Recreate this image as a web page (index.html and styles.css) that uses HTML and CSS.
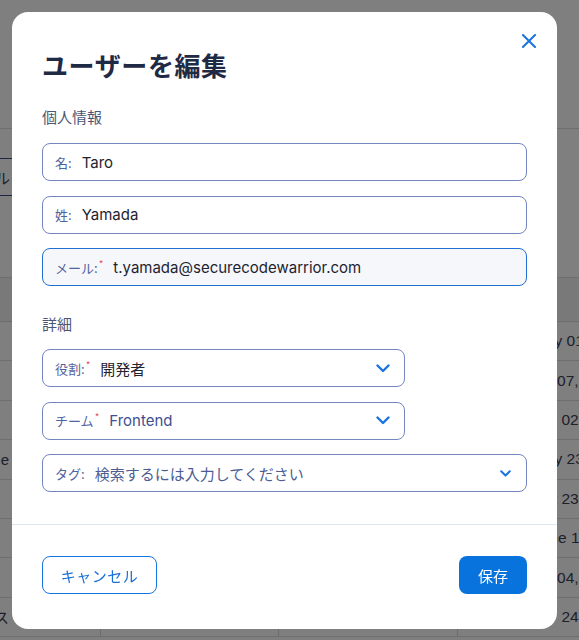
FILE: index.html
```html
<!DOCTYPE html>
<html lang="ja">
<head>
<meta charset="utf-8">
<title>ユーザーを編集</title>
<link rel="stylesheet" href="styles.css">
</head>
<body>
<div class="page">
  <div class="topbar"></div>
  <div class="toolbar"><button class="bg-btn">ファイル</button></div>
  <div class="table">
    <div class="row thead"><span></span><span></span><span></span><span></span></div>
    <div class="row"><span></span><span></span><span></span><span class="date">May 01, 2024</span></div>
    <div class="row"><span></span><span></span><span></span><span class="date">Jul 07, 2024</span></div>
    <div class="row"><span></span><span></span><span></span><span class="date">Oct 02, 2024</span></div>
    <div class="row"><span class="name">Frontende</span><span></span><span></span><span class="date">May 23, 2024</span></div>
    <div class="row"><span></span><span></span><span></span><span class="date">Oct 23, 2024</span></div>
    <div class="row"><span></span><span></span><span></span><span class="date">June 16, 2024</span></div>
    <div class="row"><span></span><span></span><span></span><span class="date">Jul 04, 2024</span></div>
    <div class="row"><span class="name">サービス</span><span></span><span></span><span class="date">Apr 24, 2024</span></div>
  </div>
</div>
<div class="backdrop"></div>
<div class="modal" role="dialog" aria-labelledby="modal-title">
  <button class="close" aria-label="閉じる">
    <svg width="14" height="14" viewBox="0 0 14 14"><path d="M1 1 L13 13 M13 1 L1 13" stroke="currentColor" stroke-width="2" stroke-linecap="square" fill="none"/></svg>
  </button>
  <div class="modal-body">
    <h1 class="title" id="modal-title">ユーザーを編集</h1>
    <h2 class="section-label">個人情報</h2>
    <div class="fields">
      <div class="field"><span class="field-label">名:</span><span class="field-value">Taro</span></div>
      <div class="field"><span class="field-label">姓:</span><span class="field-value">Yamada</span></div>
      <div class="field field-focus"><span class="field-label">メール:<sup class="req">*</sup></span><span class="field-value">t.yamada@securecodewarrior.com</span></div>
    </div>
    <h2 class="section-label section-gap">詳細</h2>
    <div class="fields">
      <div class="field select short"><span class="field-label">役割:<sup class="req">*</sup></span><span class="field-value">開発者</span>
        <svg class="chev" width="14" height="9" viewBox="0 0 14 9"><path d="M1.5 1.5 L7 7 L12.5 1.5" stroke="currentColor" stroke-width="2.4" fill="none" stroke-linecap="round" stroke-linejoin="round"/></svg></div>
      <div class="field select short"><span class="field-label">チーム<sup class="req">*</sup></span><span class="field-value blue">Frontend</span>
        <svg class="chev" width="14" height="9" viewBox="0 0 14 9"><path d="M1.5 1.5 L7 7 L12.5 1.5" stroke="currentColor" stroke-width="2.4" fill="none" stroke-linecap="round" stroke-linejoin="round"/></svg></div>
      <div class="field select"><span class="field-label">タグ:</span><span class="field-value placeholder">検索するには入力してください</span>
        <svg class="chev small" width="11" height="7" viewBox="0 0 11 7"><path d="M1.2 1.2 L5.5 5.5 L9.8 1.2" stroke="currentColor" stroke-width="2" fill="none" stroke-linecap="round" stroke-linejoin="round"/></svg></div>
    </div>
  </div>
  <div class="divider"></div>
  <div class="footer">
    <button class="btn btn-outline">キャンセル</button>
    <button class="btn btn-primary">保存</button>
  </div>
</div>
</body>
</html>
```
FILE: styles.css
```css
* { box-sizing: border-box; }
html, body { margin: 0; padding: 0; }
body {
  width: 579px;
  height: 640px;
  overflow: hidden;
  background: #ffffff;
  font-family: "Inter", "Noto Sans CJK JP", sans-serif;
}

/* background page */
.page { width: 579px; }
.topbar { height: 129px; border-bottom: 1px solid #dcdcdc; }
.toolbar { height: 149px; padding-top: 29px; border-bottom: 1px solid #dcdcdc; }
.bg-btn {
  display: block;
  margin-left: -130px;
  width: 142px;
  height: 38px;
  border: 1px solid #3a4a8c;
  border-left: 0;
  border-right: 0;
  background: #fff;
  color: #3c4257;
  font: 15px "Liberation Sans", "Noto Sans CJK JP", sans-serif;
  white-space: nowrap;
  text-align: right;
  padding: 0 2px 0 0;
}
.table { width: 579px; }
.row {
  display: grid;
  grid-template-columns: 101px 178px 179px 121px;
  height: 39.4px;
  border-bottom: 1px solid #dcdcdc;
  font: 15px "Liberation Sans", "Noto Sans CJK JP", sans-serif;
  color: #3c4257;
}
.row > span { border-right: 1px solid #dcdcdc; display: flex; align-items: center; overflow: hidden; white-space: nowrap; }
.row > span:last-child { border-right: 0; }
.thead { height: 44px; background: #f2f3f5; }
.date { padding-left: 75px; font-size: 15.5px; }
.name { justify-content: flex-end; padding-right: 91px; }

.backdrop {
  position: fixed;
  inset: 0;
  background: rgba(0, 0, 0, 0.5);
}

/* modal */
.modal {
  position: fixed;
  top: 12px;
  left: 12px;
  width: 545px;
  height: 617px;
  background: #ffffff;
  border-radius: 16px;
  display: flex;
  flex-direction: column;
}
.close {
  position: absolute;
  top: 22px;
  right: 21px;
  width: 14px;
  height: 14px;
  padding: 0;
  border: 0;
  background: none;
  color: #1a73e0;
  display: flex;
}
.modal-body { padding: 36px 30px 0; }
.title {
  margin: 0;
  font-size: 26px;
  line-height: 34px;
  font-weight: 700;
  letter-spacing: 0.6px;
  color: #1f2a44;
  font-family: "Noto Sans CJK JP", sans-serif;
}
.section-label {
  margin: 23px 0 14px;
  font-size: 15px;
  line-height: 24px;
  font-weight: 400;
  color: #4b5775;
  font-family: "Noto Sans CJK JP", sans-serif;
}
.section-gap { margin-top: 26px; margin-bottom: 13px; }
.fields { display: flex; flex-direction: column; gap: 14.5px; }
.field {
  height: 38px;
  border: 1px solid #7585bf;
  border-radius: 8px;
  display: flex;
  align-items: center;
  padding: 0 12px;
  gap: 10px;
  background: #fff;
}
.field-focus { border-color: #1f70d2; background: #f5f7fb; }
.field.short { width: 363px; }
.field-label {
  font-size: 13px;
  color: #5162a0;
  font-family: "Noto Sans CJK JP", sans-serif;
  white-space: nowrap;
}
.req { color: #e0505a; font-size: 10px; vertical-align: 5px; line-height: 0; margin-left: 1px; }
.field-value {
  font-size: 15px;
  color: #1f2330;
  font-family: "Inter", "Noto Sans CJK JP", sans-serif;
  white-space: nowrap;
  flex: 1;
}
.field-value.blue { color: #3d4f8f; }
.field-value.placeholder { color: #4d5d94; font-family: "Noto Sans CJK JP", sans-serif; }
.chev { color: #1a73e0; margin-right: 2px; flex: none; }
.chev.small { margin-right: 3px; }

.divider { height: 1px; background: #dfe4f2; margin-top: 32px; }
.footer {
  display: flex;
  justify-content: space-between;
  padding: 31px 30px 0;
}
.btn {
  height: 38px;
  border-radius: 8px;
  font-family: "Noto Sans CJK JP", sans-serif;
  font-size: 15px;
  padding: 0;
  cursor: pointer;
}
.btn-outline {
  width: 115px;
  border: 1px solid #1575e0;
  background: #fff;
  color: #1a6fd4;
  letter-spacing: 0.5px;
}
.btn-primary {
  width: 68px;
  border: 0;
  background: #0873dc;
  color: #fff;
}
```
